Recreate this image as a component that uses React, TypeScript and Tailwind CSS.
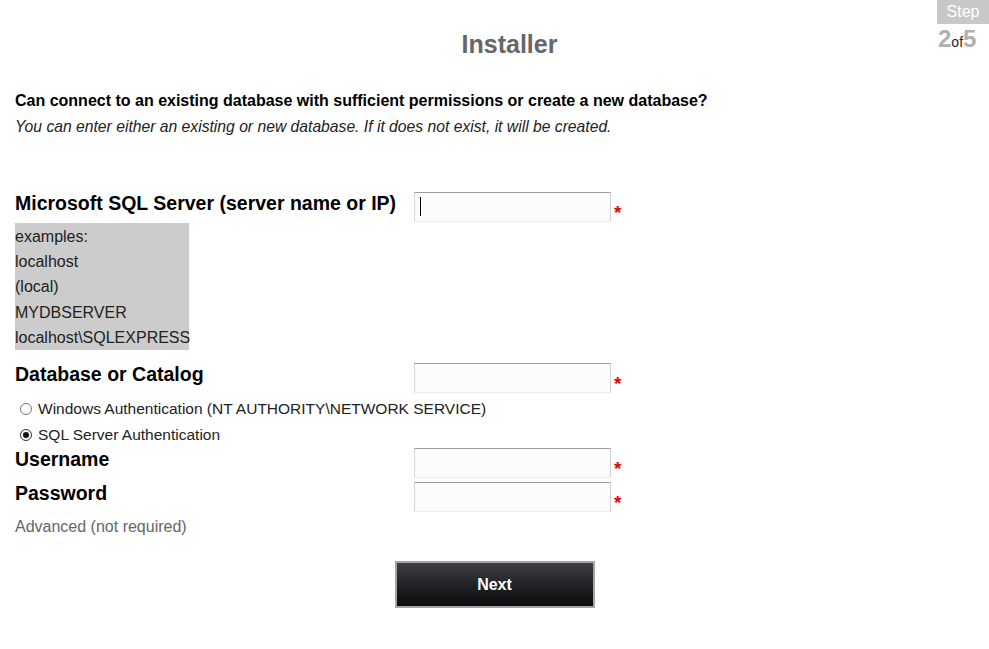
import React from "react"

const font = { fontFamily: '"Liberation Sans", Arial, sans-serif' }

function Field({ label, caret }: { label: string; caret?: boolean }) {
  return (
    <div className="flex items-center h-[30px]">
      <div className="w-[399px] pb-[6px] text-[19.5px] font-bold text-black">{label}</div>
      <div className="relative">
        <input
          className="block w-[197px] h-[30px] bg-[#fcfcfc] border border-[#d4d4d4] border-t-[#9c9c9c] border-b-[#eeeeee] outline-none px-1 text-[15px]"
          type="text"
        />
        {caret && <span className="absolute left-[6px] top-[5px] w-[1px] h-[19px] bg-black" />}
      </div>
      <span className="ml-[3px] mt-[10px] text-[19px] font-bold text-[#e00] leading-none">*</span>
    </div>
  )
}

export default function App() {
  return (
    <div className="relative w-[989px] h-[649px] bg-white text-[#111]" style={font}>
      {/* step badge */}
      <div className="absolute right-0 top-0 w-[52px] flex flex-col">
        <div className="w-full h-[24px] bg-[#c8c8c8] text-white text-[16px] leading-[24px] text-center">Step</div>
        <div className="flex items-baseline pl-[1px] text-[#b0b0b0] font-bold text-[24px] leading-[30px]">
          2<span className="text-[14px] font-normal text-[#222]">of</span>5
        </div>
      </div>

      <h1 className="pt-[30px] text-center text-[25px] font-bold text-[#666] leading-[28px] pl-[30px]">Installer</h1>

      <div className="px-[15px] pt-[33px]">
        <p className="text-[16px] font-bold text-black leading-[20px]">
          Can connect to an existing database with sufficient permissions or create a new database?
        </p>
        <p className="mt-[6px] text-[15.7px] italic text-[#222] leading-[20px]">
          You can enter either an existing or new database. If it does not exist, it will be created.
        </p>

        <div className="mt-[55px]">
          <Field label="Microsoft SQL Server (server name or IP)" caret />
          <div className="mt-[1px] w-[174px] bg-[#cccccc] text-[16px] text-[#222] leading-[25.2px] pt-[1px]">
            <div>examples:</div>
            <div>localhost</div>
            <div>(local)</div>
            <div>MYDBSERVER</div>
            <div>localhost\SQLEXPRESS</div>
          </div>
          <div className="mt-[13px]">
            <Field label="Database or Catalog" />
          </div>
          <div className="mt-[3px] flex flex-col text-[15.5px] text-[#222] leading-[26px]">
            <label className="flex items-center gap-[6px] pl-[5px]">
              <span className="w-[12px] h-[12px] rounded-full border border-[#777] bg-white" />
              Windows Authentication (NT AUTHORITY\NETWORK SERVICE)
            </label>
            <label className="flex items-center gap-[6px] pl-[5px]">
              <span className="w-[12px] h-[12px] rounded-full border border-[#333] bg-white flex items-center justify-center">
                <span className="w-[6px] h-[6px] rounded-full bg-[#111]" />
              </span>
              SQL Server Authentication
            </label>
          </div>
          <div className="flex flex-col gap-[4px]">
            <Field label="Username" />
            <Field label="Password" />
          </div>
          <p className="mt-[5px] text-[16px] text-[#666] leading-[20px]">Advanced (not required)</p>
        </div>

        <div className="mt-[24px] flex justify-center">
          <button className="w-[200px] h-[47px] border-2 border-[#a4a4a4] bg-gradient-to-b from-[#3c3f45] to-[#0b0b0b] text-white text-[16px] font-bold">
            Next
          </button>
        </div>
      </div>
    </div>
  )
}
